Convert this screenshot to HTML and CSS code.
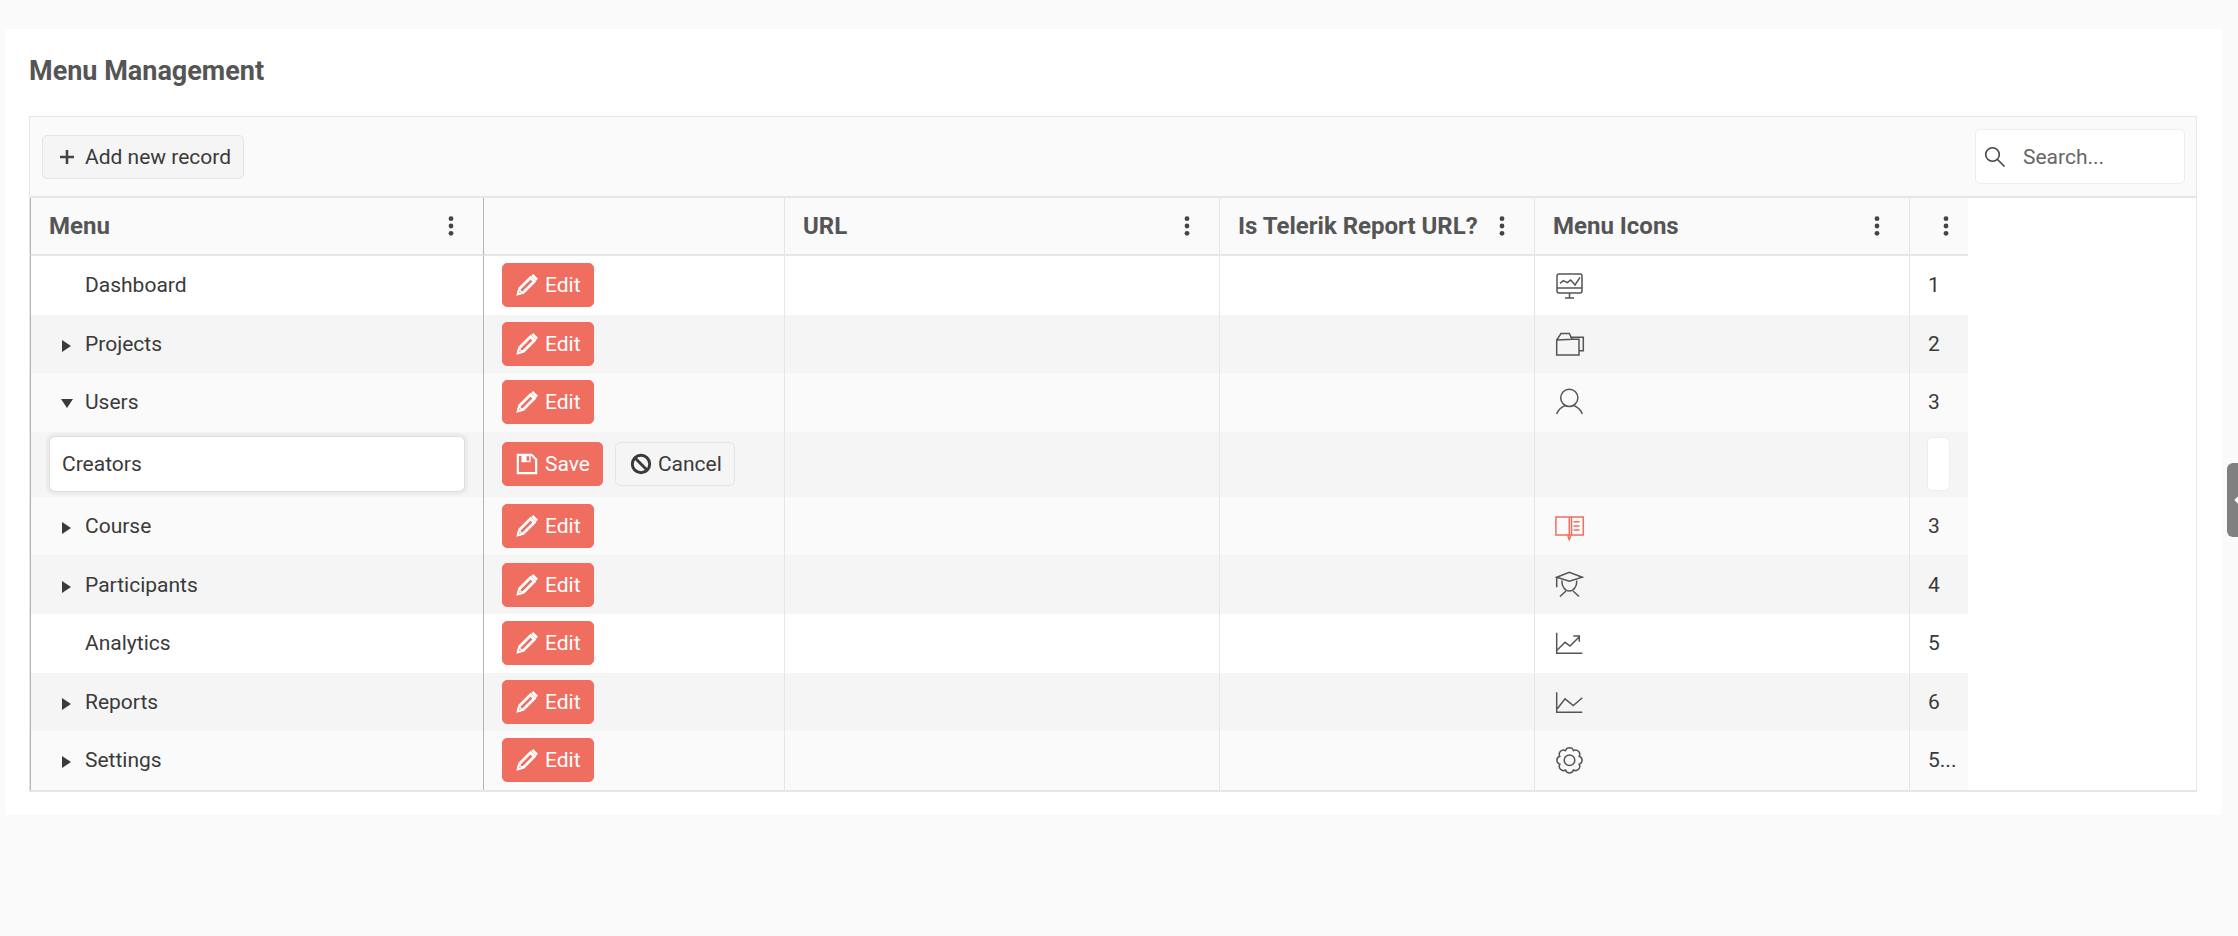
FILE: index.html
```html
<!DOCTYPE html>
<html lang="en">
<head>
    <meta charset="UTF-8">
    <meta name="viewport" content="width=device-width, initial-scale=1.0">
    <title>Menu Management</title>
    <link rel="stylesheet" href="styles.css">
</head>
<body>
    <svg class="icon-defs" width="0" height="0">
        <symbol id="i-kebab" viewBox="0 0 8 24">
            <circle cx="4" cy="4" r="2.6"/>
            <circle cx="4" cy="12" r="2.6"/>
            <circle cx="4" cy="20" r="2.6"/>
        </symbol>
        <symbol id="i-pencil" viewBox="0 0 24 24">
            <path class="line-pencil" d="M2.500 21.500 4 15.800 15.800 4l4.200 4.200L8.200 20z"/>
            <path class="solid" d="M.8 23.200l1.800-7.700 5.900 5.900z"/>
            <path class="hole" d="M4 18.600l1.400 1.400-2 .6z"/>
            <path class="solid" d="M16.500 2.300 18.800 0l5.200 5.200-2.300 2.300z"/>
        </symbol>
        <symbol id="i-save" viewBox="0 0 24 24">
            <path class="line-bold" d="M2 2h15l5 5v15H2z"/>
            <path class="solid" d="M6 2h10v8H6z"/>
            <path class="hole" d="M11.500 3.500h3v5h-3z"/>
        </symbol>
        <symbol id="i-monitor" viewBox="0 0 30 30">
            <rect x="2" y="3" width="25" height="19" rx="2"/>
            <path d="M2 17h25M14.500 22v5M10 27h9M5 12.300 8.300 9.700l4 2L15.700 9l4.300 5 5-7.700"/>
        </symbol>
        <symbol id="i-folder" viewBox="0 0 30 30">
            <path d="M6 3.500h8.300l3 5.800H24V25H1.700V10zM1.700 10l15.600-.7M15 7.300h13.300v13.400H24"/>
        </symbol>
        <symbol id="i-user" viewBox="0 0 30 30">
            <circle cx="14.300" cy="9.800" r="8.600"/>
            <path d="M1.700 26c1.500-4 4.500-7 8.800-8.500M27.300 26c-1.500-4-4.500-7-8.800-8.500"/>
        </symbol>
        <symbol id="i-book" viewBox="0 0 30 30">
            <path d="M14.300 5H.9v18h13.400zM14.300 5h14v18h-14zM16.500 5v18M12.800 23.500l1.500 4 1.500-4M18.500 9.700h6M18.500 14h6M18.500 18h6"/>
        </symbol>
        <symbol id="i-grad" viewBox="0 0 30 30">
            <path d="M1.700 6.200 14.300 1.200l13 5-13 4zM1.700 6.200v10M7 9.500c-.5 5 2.500 10.500 7.300 10.500s8-5.500 7.300-10.500M5 25.500l6-5.500M24 25.500l-6-5.500"/>
        </symbol>
        <symbol id="i-chart-up" viewBox="0 0 30 30">
            <path d="M1.700 3.700v20.600h25.600M2.300 21 10 13.300l5 3.700 9.300-9.300M18.300 7h6v5.700"/>
        </symbol>
        <symbol id="i-chart-down" viewBox="0 0 30 30">
            <path d="M1.700 4.200v20h25.600M2.300 20.800 10 10.800l8.300 6.700 9-7.700"/>
        </symbol>
        <symbol id="i-gear" viewBox="0 0 30 30">
            <path d="M24.200 10.300A4.200 4.200 0 0 1 24.200 18.300 4.200 4.200 0 0 1 18.500 24 4.200 4.200 0 0 1 10.500 24 4.200 4.200 0 0 1 4.800 18.300 4.200 4.200 0 0 1 4.800 10.300 4.200 4.200 0 0 1 10.500 4.600 4.200 4.200 0 0 1 18.500 4.600 4.200 4.200 0 0 1 24.200 10.300z"/>
            <circle cx="14.500" cy="14.300" r="5.300"/>
        </symbol>
    </svg>

    <div class="panel">
        <h1 class="panel-title">Menu Management</h1>

        <div class="grid">
            <div class="toolbar">
                <button class="btn">
                    <svg class="btn-plus" viewBox="0 0 16 16"><path d="M8 1v14M1 8h14"/></svg>
                    Add new record
                </button>
                <div class="search">
                    <svg class="search-icon" viewBox="0 0 22 22"><circle cx="8.500" cy="8.500" r="6.800"/><path d="M13.500 13.500 20.500 20.500"/></svg>
                    <input class="search-input" type="text" placeholder="Search...">
                </div>
            </div>

            <table class="tree">
                <colgroup>
                    <col class="col-menu">
                    <col class="col-actions">
                    <col class="col-url">
                    <col class="col-report">
                    <col class="col-icons">
                    <col class="col-order">
                </colgroup>
                <thead>
                    <tr>
                        <th><div class="th-inner">Menu <svg class="kebab"><use href="#i-kebab"/></svg></div></th>
                        <th></th>
                        <th><div class="th-inner">URL <svg class="kebab"><use href="#i-kebab"/></svg></div></th>
                        <th><div class="th-inner">Is Telerik Report URL? <svg class="kebab"><use href="#i-kebab"/></svg></div></th>
                        <th><div class="th-inner">Menu Icons <svg class="kebab"><use href="#i-kebab"/></svg></div></th>
                        <th class="th-order"><div class="th-inner"><svg class="kebab"><use href="#i-kebab"/></svg></div></th>
                    </tr>
                </thead>
                <tbody>
                    <tr class="row-white">
                        <td><span class="node">Dashboard</span></td>
                        <td><button class="btn btn-primary"><svg class="btn-icon"><use href="#i-pencil"/></svg>Edit</button></td>
                        <td></td><td></td>
                        <td><svg class="menu-icon"><use href="#i-monitor"/></svg></td>
                        <td class="order">1</td>
                    </tr>
                    <tr class="row-alt">
                        <td><span class="node"><i class="arrow-right"></i>Projects</span></td>
                        <td><button class="btn btn-primary"><svg class="btn-icon"><use href="#i-pencil"/></svg>Edit</button></td>
                        <td></td><td></td>
                        <td><svg class="menu-icon"><use href="#i-folder"/></svg></td>
                        <td class="order">2</td>
                    </tr>
                    <tr>
                        <td><span class="node"><i class="arrow-down"></i>Users</span></td>
                        <td><button class="btn btn-primary"><svg class="btn-icon"><use href="#i-pencil"/></svg>Edit</button></td>
                        <td></td><td></td>
                        <td><svg class="menu-icon"><use href="#i-user"/></svg></td>
                        <td class="order">3</td>
                    </tr>
                    <tr class="row-alt row-edit">
                        <td class="cell-input"><input class="text-input" type="text" value="Creators"></td>
                        <td>
                            <div class="edit-actions">
                                <button class="btn btn-primary"><svg class="btn-icon"><use href="#i-save"/></svg>Save</button>
                                <button class="btn btn-cancel">
                                    <svg class="btn-icon" viewBox="0 0 24 24"><circle cx="12" cy="12" r="9.500"/><path d="M5.500 5.500l13 13"/></svg>
                                    Cancel
                                </button>
                            </div>
                        </td>
                        <td></td><td></td><td></td>
                        <td class="cell-number"><input class="number-input" type="text"></td>
                    </tr>
                    <tr>
                        <td><span class="node"><i class="arrow-right"></i>Course</span></td>
                        <td><button class="btn btn-primary"><svg class="btn-icon"><use href="#i-pencil"/></svg>Edit</button></td>
                        <td></td><td></td>
                        <td><svg class="menu-icon menu-icon-active"><use href="#i-book"/></svg></td>
                        <td class="order">3</td>
                    </tr>
                    <tr class="row-alt">
                        <td><span class="node"><i class="arrow-right"></i>Participants</span></td>
                        <td><button class="btn btn-primary"><svg class="btn-icon"><use href="#i-pencil"/></svg>Edit</button></td>
                        <td></td><td></td>
                        <td><svg class="menu-icon"><use href="#i-grad"/></svg></td>
                        <td class="order">4</td>
                    </tr>
                    <tr class="row-white">
                        <td><span class="node">Analytics</span></td>
                        <td><button class="btn btn-primary"><svg class="btn-icon"><use href="#i-pencil"/></svg>Edit</button></td>
                        <td></td><td></td>
                        <td><svg class="menu-icon"><use href="#i-chart-up"/></svg></td>
                        <td class="order">5</td>
                    </tr>
                    <tr class="row-alt">
                        <td><span class="node"><i class="arrow-right"></i>Reports</span></td>
                        <td><button class="btn btn-primary"><svg class="btn-icon"><use href="#i-pencil"/></svg>Edit</button></td>
                        <td></td><td></td>
                        <td><svg class="menu-icon"><use href="#i-chart-down"/></svg></td>
                        <td class="order">6</td>
                    </tr>
                    <tr>
                        <td><span class="node"><i class="arrow-right"></i>Settings</span></td>
                        <td><button class="btn btn-primary"><svg class="btn-icon"><use href="#i-pencil"/></svg>Edit</button></td>
                        <td></td><td></td>
                        <td><svg class="menu-icon"><use href="#i-gear"/></svg></td>
                        <td class="order">5...</td>
                    </tr>
                </tbody>
            </table>
        </div>
    </div>

    <div class="side-handle"><span class="side-chevron"></span></div>
</body>
</html>
```
FILE: styles.css
```css
* {
    margin: 0;
    padding: 0;
    box-sizing: border-box;
    font-family: Roboto, sans-serif;
}

html, body {
    height: 100%;
    overflow: hidden;
}

body {
    background-color: #fafafa;
    color: #3a3a3a;
    font-size: 21px;
    padding: 29px 16px 0 5px;
}

.icon-defs {
    position: absolute;
}

.panel {
    background-color: #fff;
    height: 786px;
    padding: 0 25px 0 24px;
}

.panel-title {
    color: #555;
    font-size: 27px;
    font-weight: 700;
    height: 87px;
    line-height: 85px;
}

.grid {
    border: 1px solid #e6e6e6;
    border-bottom-width: 2px;
}

.toolbar {
    display: flex;
    align-items: center;
    justify-content: space-between;
    height: 81px;
    padding: 0 11px 0 12px;
    background-color: #fafafa;
    border-bottom: 2px solid #e6e6e6;
}

.btn {
    display: inline-flex;
    align-items: center;
    height: 44px;
    padding: 0 12px;
    border: 1px solid #e4e4e4;
    border-radius: 5px;
    background-color: #f5f5f5;
    color: #3a3a3a;
    font-size: 21px;
}

.btn-plus {
    width: 16px;
    height: 16px;
    margin: 1px 10px 0 4px;
    fill: none;
    stroke: #444;
    stroke-width: 2.6;
}

.btn-primary {
    background-color: #f06e60;
    border-color: #f06e60;
    color: #fff;
    padding: 0 12px 0 13px;
}

.btn-icon {
    width: 22px;
    height: 22px;
    margin-right: 7px;
    fill: none;
    stroke: #fff;
}

.line-bold {
    fill: none;
    stroke: #fff;
    stroke-width: 2.400;
}

.line-pencil {
    fill: none;
    stroke: #fff;
    stroke-width: 3;
}

.solid {
    fill: #fff;
    stroke: none;
}

.hole {
    fill: #f06e60;
    stroke: none;
}

.btn-cancel {
    padding: 0 12px 0 14px;
}

.btn-cancel .btn-icon {
    margin-right: 6px;
    stroke: #3a3a3a;
    stroke-width: 3.2;
}

.search {
    display: flex;
    align-items: center;
    width: 210px;
    height: 55px;
    background-color: #fff;
    border: 1px solid #eee;
    border-radius: 5px;
    padding-left: 8px;
}

.search-icon {
    width: 22px;
    height: 22px;
    margin-right: 17px;
    flex-shrink: 0;
    fill: none;
    stroke: #444;
    stroke-width: 1.6;
}

.search-input {
    border: none;
    outline: none;
    width: 140px;
    background: none;
    font-size: 21px;
}

.search-input::placeholder {
    color: #666;
    opacity: 1;
}

.tree {
    border-collapse: separate;
    border-spacing: 0;
    table-layout: fixed;
    width: 1938px;
}

.col-menu { width: 454px; }
.col-actions { width: 301px; }
.col-url { width: 435px; }
.col-report { width: 315px; }
.col-icons { width: 375px; }
.col-order { width: 58px; }

.tree th {
    height: 58px;
    background-color: #fafafa;
    border-right: 1px solid #e6e6e6;
    border-bottom: 2px solid #e6e6e6;
    color: #555;
    font-size: 24px;
    font-weight: 700;
    text-align: left;
    padding: 0 28px 0 18px;
}

.th-inner {
    display: flex;
    align-items: center;
    justify-content: space-between;
}

.tree th.th-order {
    border-right: none;
    padding: 0 18px 0 0;
}

.th-order .th-inner {
    justify-content: flex-end;
}

.tree th:first-child,
.tree td:first-child {
    border-left: 1px solid #b4b4b4;
    padding-left: 18px;
}

.tree th:nth-child(1),
.tree td:nth-child(1) {
    border-right: 1px solid #b4b4b4;
}

.kebab {
    width: 8px;
    height: 22px;
    fill: #444;
}

.tree td {
    height: 58.600px;
    background-color: #fafafa;
    border-right: 1px solid #e6e6e6;
    padding: 0 18px;
}

.tree td:last-child {
    border-right: none;
}

.row-white td { background-color: #fff !important; }
.row-alt td { background-color: #f5f5f5 !important; }
.row-edit td { height: 65px; }

.node {
    display: flex;
    align-items: center;
    padding-left: 36px;
    position: relative;
}

.arrow-right {
    position: absolute;
    left: 13px;
    top: 8px;
    border-left: 9px solid #3a3a3a;
    border-top: 6px solid transparent;
    border-bottom: 6px solid transparent;
}

.arrow-down {
    position: absolute;
    left: 12px;
    top: 9px;
    border-top: 9px solid #3a3a3a;
    border-left: 6px solid transparent;
    border-right: 6px solid transparent;
}

.edit-actions {
    display: flex;
    gap: 12px;
}

.tree td.cell-input {
    padding: 0 19px 0 19px;
}

.text-input {
    display: block;
    width: 100%;
    height: 54px;
    border: none;
    border-radius: 5px;
    background-color: #fff;
    box-shadow: 0 0 0 1px #ddd, 0 0 0 4px #ececec;
    font-size: 21px;
    color: #3a3a3a;
    padding: 0 12px;
    outline: none;
}

.tree td.cell-number {
    padding: 0 18px 0 17px;
}

.number-input {
    display: block;
    width: 23px;
    height: 54px;
    border: 1px solid #eee;
    border-radius: 5px;
    background-color: #fff;
    outline: none;
}

.menu-icon {
    display: block;
    width: 30px;
    height: 30px;
    margin: 2px 0 0 2px;
    fill: none;
    stroke: #555;
    stroke-width: 1.500;
}

.menu-icon-active {
    stroke: #f06e60;
}

.tree td.order {
    white-space: nowrap;
    overflow: hidden;
}

.side-handle {
    position: absolute;
    right: 0;
    top: 463px;
    width: 11px;
    height: 74px;
    background-color: #808080;
    border-radius: 6px 0 0 6px;
    display: flex;
    align-items: center;
    overflow: hidden;
}

.side-chevron {
    display: block;
    flex-shrink: 0;
    width: 8px;
    height: 8px;
    margin-left: 9px;
    background-color: #fff;
    transform: rotate(45deg);
}
```
